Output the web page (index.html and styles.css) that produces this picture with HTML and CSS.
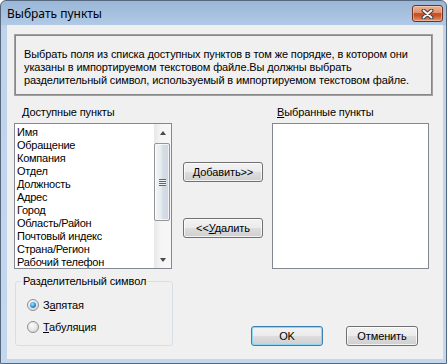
FILE: index.html
```html
<!DOCTYPE html>
<html>
<head>
<meta charset="utf-8">
<link rel="stylesheet" href="styles.css">
</head>
<body>
<div class="window">
  <div class="titlebar">
    <span class="title">Выбрать пункты</span>
    <div class="close">
      <svg width="13" height="10" viewBox="0 0 13 10"><path d="M2.5 1.5 L10.5 8.5 M10.5 1.5 L2.5 8.5" stroke="#3b3b3b" stroke-width="4" stroke-linecap="round"/><path d="M2.5 1.5 L10.5 8.5 M10.5 1.5 L2.5 8.5" stroke="#f4f4f4" stroke-width="2" stroke-linecap="round"/></svg>
    </div>
  </div>
  <div class="client">
    <div class="desc">Выбрать поля из списка доступных пунктов в том же порядке, в котором они<br>указаны в импортируемом текстовом файле.Вы должны выбрать<br>разделительный символ, используемый в импортируемом текстовом файле.</div>
    <div class="lists">
      <div class="col col-left">
        <div class="label label-left"><u>Д</u>оступные пункты</div>
        <div class="listbox">
          <ul class="items">
            <li>Имя</li>
            <li>Обращение</li>
            <li>Компания</li>
            <li>Отдел</li>
            <li>Должность</li>
            <li>Адрес</li>
            <li>Город</li>
            <li>Область/Район</li>
            <li>Почтовый индекс</li>
            <li>Страна/Регион</li>
            <li>Рабочий телефон</li>
          </ul>
          <div class="scrollbar">
            <div class="sb-btn"><span class="arrow-up"></span></div>
            <div class="sb-track"><div class="thumb"><span class="grip"></span></div></div>
            <div class="sb-btn"><span class="arrow-down"></span></div>
          </div>
        </div>
      </div>
      <div class="mid">
        <button class="btn"><u>Д</u>обавить&gt;&gt;</button>
        <button class="btn">&lt;&lt;<u>У</u>далить</button>
      </div>
      <div class="col col-right">
        <div class="label label-right"><u>В</u>ыбранные пункты</div>
        <div class="listbox"></div>
      </div>
    </div>
    <div class="bottom">
      <fieldset class="group">
        <legend>Разделительный символ</legend>
        <div class="radios">
          <div class="radio"><span class="rb checked"></span><span>З<u>а</u>пятая</span></div>
          <div class="radio"><span class="rb"></span><span><u>Т</u>абуляция</span></div>
        </div>
      </fieldset>
      <div class="actions">
        <button class="btn btn-default">OK</button>
        <button class="btn">Отменить</button>
      </div>
    </div>
  </div>
</div>
</body>
</html>
```
FILE: styles.css
```css
* { box-sizing: border-box; }
html, body { margin: 0; padding: 0; }
body {
  width: 447px; height: 364px; overflow: hidden; background: #ffffff;
  font-family: "Liberation Sans", Arial, sans-serif; font-size: 11px; color: #000;
  letter-spacing: -0.12px;
}
u { text-decoration: underline; text-underline-offset: 1px; }

.window {
  width: 447px; height: 364px;
  border: 1px solid #56687e; border-radius: 6px 6px 0 0;
  background: linear-gradient(to bottom, #9bb7d7 0px, #b0c9e6 24px, #bfd4ec 25px, #c3d8ef 100%);
  display: flex; flex-direction: column;
}
.titlebar {
  height: 24px; display: flex; align-items: flex-start; justify-content: space-between;
  padding: 0 3px 0 6px;
}
.title {
  font-family: "Noto Sans", "Open Sans", sans-serif; font-size: 12px; line-height: 16px;
  margin-top: 5px; color: #000; letter-spacing: 0;
}
.close {
  width: 31px; height: 17px; margin-top: 4px;
  border: 1px solid #6e3322; border-radius: 3px;
  background: linear-gradient(to bottom, #eeb598 0%, #e08e6a 45%, #c7512a 48%, #c6512a 62%, #e4946a 100%);
  box-shadow: inset 0 0 0 1px rgba(255, 225, 205, 0.45);
  display: flex; align-items: center; justify-content: center;
}
.close svg { display: block; }

.client {
  margin: 0 3px 0 6px; height: 334px;
  background: #f0f0f0;
  padding: 9px 10px 0 7px;
}

.desc {
  height: 62px; width: 419px;
  border: 1px solid #a0a0a0;
  box-shadow: inset 0 0 0 1px #878787;
  padding: 13px 4px 0 9px;
  line-height: 13px; white-space: nowrap;
}

.lists { display: flex; margin-top: 10px; }
.col { display: flex; flex-direction: column; }
.col-left { width: 158px; }
.col-right { width: 157px; }
.label { line-height: 13px; height: 13px; margin-bottom: 4px; }
.label-left { padding-left: 8px; }
.label-right { padding-left: 5px; }

.listbox {
  height: 146px; border: 1px solid #828790; background: #fff;
  display: flex;
}
.items {
  flex: 1; list-style: none; margin: 0; padding: 2px 0 0 2px;
  line-height: 13px; overflow: hidden; white-space: nowrap;
  letter-spacing: -0.25px;
}
.scrollbar {
  width: 17px; display: flex; flex-direction: column;
  background: linear-gradient(to right, #e8e8e8, #f5f5f5 40%, #f7f7f7);
}
.sb-btn { height: 17px; display: flex; align-items: center; justify-content: center; }
.arrow-up {
  width: 0; height: 0;
  border-left: 3.5px solid transparent; border-right: 3.5px solid transparent;
  border-bottom: 4px solid #4a4a4a;
}
.arrow-down {
  width: 0; height: 0;
  border-left: 3.5px solid transparent; border-right: 3.5px solid transparent;
  border-top: 4px solid #4a4a4a;
}
.sb-track { flex: 1; padding: 2px 1px 0 0; }
.thumb {
  height: 78px;
  border: 1px solid #959595; border-radius: 2px;
  background: linear-gradient(to right, #f4f5f6 0%, #e6ebf0 45%, #d5dde6 55%, #cfd8e2 100%);
  box-shadow: inset 0 0 0 1px rgba(255,255,255,0.7);
  display: flex; align-items: center; justify-content: center;
}
.grip {
  width: 7px; height: 7px;
  background: repeating-linear-gradient(to bottom, #5e6670 0px, #5e6670 1px, #eef2f6 1px, #eef2f6 2px);
}

.mid {
  width: 80px; margin: 0 9px 0 11px; padding-top: 56px;
  display: flex; flex-direction: column; gap: 36px;
}
.btn {
  height: 20px; padding: 0;
  font-family: "Liberation Sans", Arial, sans-serif; font-size: 11px; color: #000;
  letter-spacing: -0.12px;
  border: 1px solid #707070; border-radius: 3px;
  background: linear-gradient(to bottom, #f2f2f2 0%, #ebebeb 50%, #dddddd 51%, #cfcfcf 100%);
  box-shadow: inset 0 0 0 1px rgba(255,255,255,0.75);
  line-height: 16px;
}
.mid .btn { width: 80px; }

.bottom { display: flex; align-items: flex-end; margin-top: 6px; }
.group {
  width: 158px; height: 71px; margin: 0 0 0 1px; padding: 0;
  border: 1px solid #d5dfe5; border-radius: 3px; min-width: 0;
}
.group legend {
  margin-left: 5px; padding: 0 2px; line-height: 13px; font-size: 11px;
}
.radios { padding: 9px 0 0 11px; display: flex; flex-direction: column; gap: 6px; }
.radio { height: 16px; display: flex; align-items: center; line-height: 13px; }
.rb {
  width: 12px; height: 12px; border-radius: 50%; margin-right: 4px; flex: none;
  border: 1px solid #8f8f8f;
  background: radial-gradient(circle at 40% 35%, #fbfbfb 0%, #e6e6e6 55%, #cfcfcf 100%);
  display: flex; align-items: center; justify-content: center;
}
.rb.checked::after {
  content: ""; width: 6px; height: 6px; border-radius: 50%;
  background: radial-gradient(circle at 40% 35%, #a8e1ff 0%, #2c8fdc 55%, #0f5fa6 100%);
}

.actions { display: flex; gap: 23px; margin-left: auto; margin-right: 15px; }
.actions .btn { width: 72px; }
.btn-default {
  border-color: #3c7fb1;
  box-shadow: inset 0 0 0 1px #8fd6f4;
}
```
